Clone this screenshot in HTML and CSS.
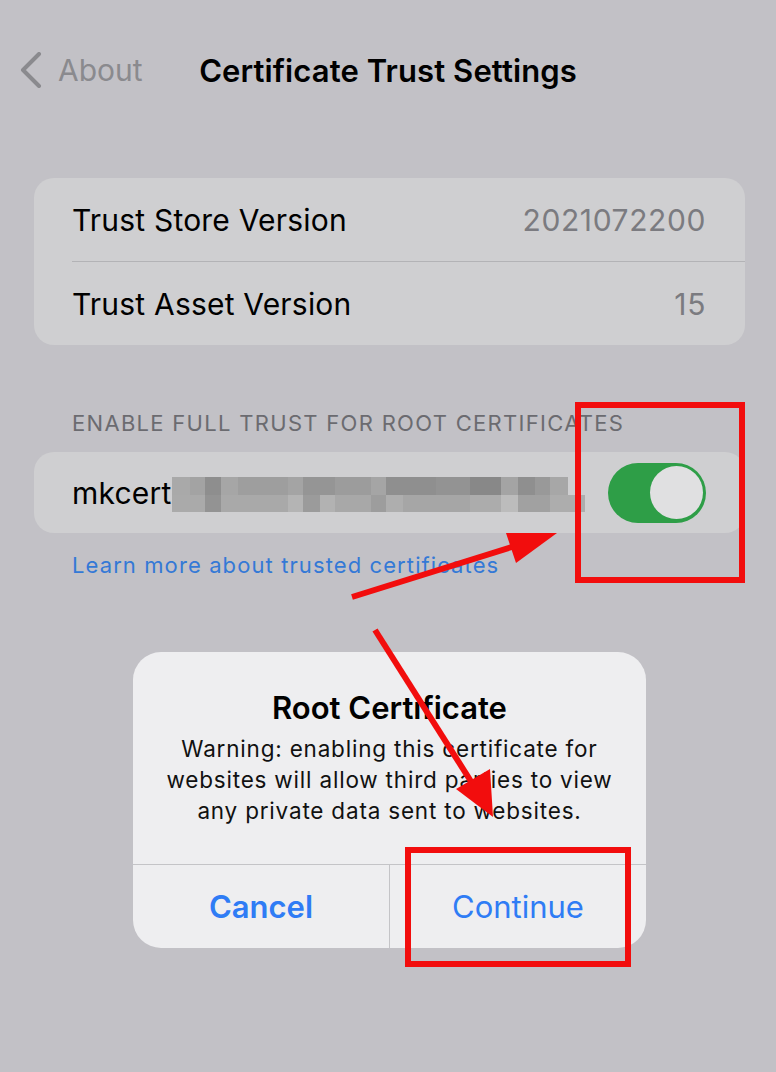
FILE: index.html
```html
<!DOCTYPE html>
<html lang="en">
<head>
<meta charset="utf-8">
<title>Certificate Trust Settings</title>
<link rel="stylesheet" href="styles.css">
</head>
<body>
<div class="screen">
  <header class="nav">
    <div class="back">
      <svg class="chev" width="26" height="36" viewBox="0 0 26 36"><path d="M21 2 L5 18 L21 34" fill="none" stroke="#8a8a8e" stroke-width="4" stroke-linecap="round" stroke-linejoin="round"/></svg>
      <span class="back-label">About</span>
    </div>
    <h1 class="title">Certificate Trust Settings</h1>
    <div></div>
  </header>

  <section class="card">
    <div class="row"><span class="label">Trust Store Version</span><span class="value">2021072200</span></div>
    <div class="sep"></div>
    <div class="row"><span class="label">Trust Asset Version</span><span class="value">15</span></div>
  </section>

  <div class="section-header">ENABLE FULL TRUST FOR ROOT CERTIFICATES</div>
  <section class="card">
    <div class="row row-cert">
      <span class="label">mkcert</span>
      <span class="blur"><span class="blur-a"></span><span class="blur-b"></span></span>
      <span class="toggle"><span class="knob"></span></span>
    </div>
  </section>
  <div class="link">Learn more about trusted certificates</div>

  <div class="alert">
    <div class="alert-body">
      <div class="alert-title">Root Certificate</div>
      <div class="alert-msg">Warning: enabling this certificate for<br>websites will allow third parties to view<br>any private data sent to websites.</div>
    </div>
    <div class="alert-actions">
      <div class="btn btn-cancel">Cancel</div>
      <div class="btn btn-continue">Continue</div>
    </div>
  </div>

  <div class="mark mark-toggle"></div>
  <div class="mark mark-continue"></div>
  <svg class="arrows" width="776" height="1072" viewBox="0 0 776 1072">
    <line x1="352" y1="597" x2="515" y2="546" stroke="#f20d0d" stroke-width="6"/>
    <polygon points="557,533 506,533 516,563" fill="#f20d0d"/>
    <line x1="375" y1="630" x2="472" y2="783" stroke="#f20d0d" stroke-width="6"/>
    <polygon points="493,817 456,789 490,769" fill="#f20d0d"/>
  </svg>
</div>
</body>
</html>
```

FILE: styles.css
```css
* { box-sizing: border-box; }
html, body { margin: 0; padding: 0; }
body {
  background: #c2c1c6;
  font-family: Inter, "Noto Sans", "Liberation Sans", sans-serif;
  color: #000;
}
.screen {
  position: relative;
  width: 776px;
  height: 1072px;
  overflow: hidden;
}
.nav {
  height: 140px;
  display: grid;
  grid-template-columns: 1fr auto 1fr;
  align-items: center;
}
.back {
  display: flex;
  align-items: center;
  padding-left: 18px;
  gap: 14px;
  color: #8a8a8e;
  font-size: 30px;
}
.chev { display: block; }
.title {
  margin: 0;
  font-size: 31px;
  font-weight: 600;
  letter-spacing: 0.1px;
}
.card {
  margin: 0 31px 0 34px;
  background: #cfcfd1;
  border-radius: 20px;
}
.nav + .card { margin-top: 38px; }
.row {
  height: 83px;
  display: flex;
  align-items: center;
  justify-content: space-between;
  padding: 0 39px 0 38px;
  font-size: 30px;
  letter-spacing: 0.2px;
}
.value { color: #7b7b80; letter-spacing: 0.6px; }
.sep {
  height: 1px;
  margin-left: 38px;
  background: #b3b3b6;
}
.section-header {
  margin: 63px 0 14px 72px;
  height: 30px;
  line-height: 30px;
  font-size: 22px;
  color: #6b6b70;
  letter-spacing: 1.3px;
}
.row-cert {
  height: 81px;
  justify-content: flex-start;
}
.blur {
  display: flex;
  flex-direction: column;
  margin-left: 1px;
  height: 35px;
  align-self: center;
  margin-top: 4px;
}
.blur-a, .blur-b { display: block; height: 17.5px; }
.blur-a {
  width: 396px;
  background: linear-gradient(90deg,
    #a9a9a9 0 18px, #a3a3a3 18px 33px, #8e8e8e 33px 49px, #a6a6a6 49px 66px,
    #9e9e9e 66px 116px, #a4a4a4 116px 131px, #959595 131px 163px, #9c9c9c 163px 199px,
    #a5a5a5 199px 214px, #8f8f8f 214px 264px, #939393 264px 298px, #888888 298px 329px,
    #a4a4a4 329px 346px, #8f8f8f 346px 363px, #999999 363px 378px, #a7a7a7 378px 396px);
}
.blur-b {
  width: 413px;
  background: linear-gradient(90deg,
    #aaaaaa 0 33px, #939393 33px 49px, #a9a9a9 49px 116px, #b4b4b4 116px 131px,
    #9b9b9b 131px 148px, #b2b2b2 148px 163px, #a8a8a8 163px 199px, #9d9d9d 199px 214px,
    #aeaeae 214px 231px, #a6a6a6 231px 298px, #acacac 298px 329px, #bcbcbc 329px 346px,
    #a1a1a1 346px 378px, #adadad 378px 413px);
}
.toggle {
  margin-left: auto;
  flex-shrink: 0;
  width: 98px;
  height: 60px;
  border-radius: 30px;
  background: #2e9e47;
  display: flex;
  align-items: center;
  justify-content: flex-end;
  padding-right: 3px;
}
.knob {
  width: 53px;
  height: 53px;
  border-radius: 50%;
  background: #e0e0e1;
}
.link {
  margin: 17px 0 0 72px;
  height: 30px;
  line-height: 30px;
  font-size: 22px;
  color: #3479d6;
  letter-spacing: 1.1px;
}
.alert {
  position: absolute;
  left: 133px;
  top: 652px;
  width: 513px;
  height: 296px;
  background: #eeeef0;
  border-radius: 28px;
  display: flex;
  flex-direction: column;
  overflow: hidden;
}
.alert-body {
  height: 213px;
  padding: 38px 10px 0;
  text-align: center;
  border-bottom: 1px solid #c4c4c7;
}
.alert-title {
  font-size: 31px;
  font-weight: 600;
  line-height: 36px;
}
.alert-msg {
  margin-top: 7px;
  font-size: 22.5px;
  line-height: 31px;
  color: #111;
  letter-spacing: 0.8px;
  white-space: nowrap;
}
.alert-actions {
  flex: 1;
  display: grid;
  grid-template-columns: 257px 1fr;
}
.btn {
  display: flex;
  align-items: center;
  justify-content: center;
  font-size: 31px;
  color: #2f7cf5;
}
.btn-cancel { font-weight: 600; border-right: 1px solid #c4c4c7; }
.mark {
  position: absolute;
  border: 6px solid #f20d0d;
}
.mark-toggle { left: 575px; top: 402px; width: 170px; height: 181px; }
.mark-continue { left: 405px; top: 847px; width: 226px; height: 120px; }
.arrows { position: absolute; left: 0; top: 0; pointer-events: none; }
```
